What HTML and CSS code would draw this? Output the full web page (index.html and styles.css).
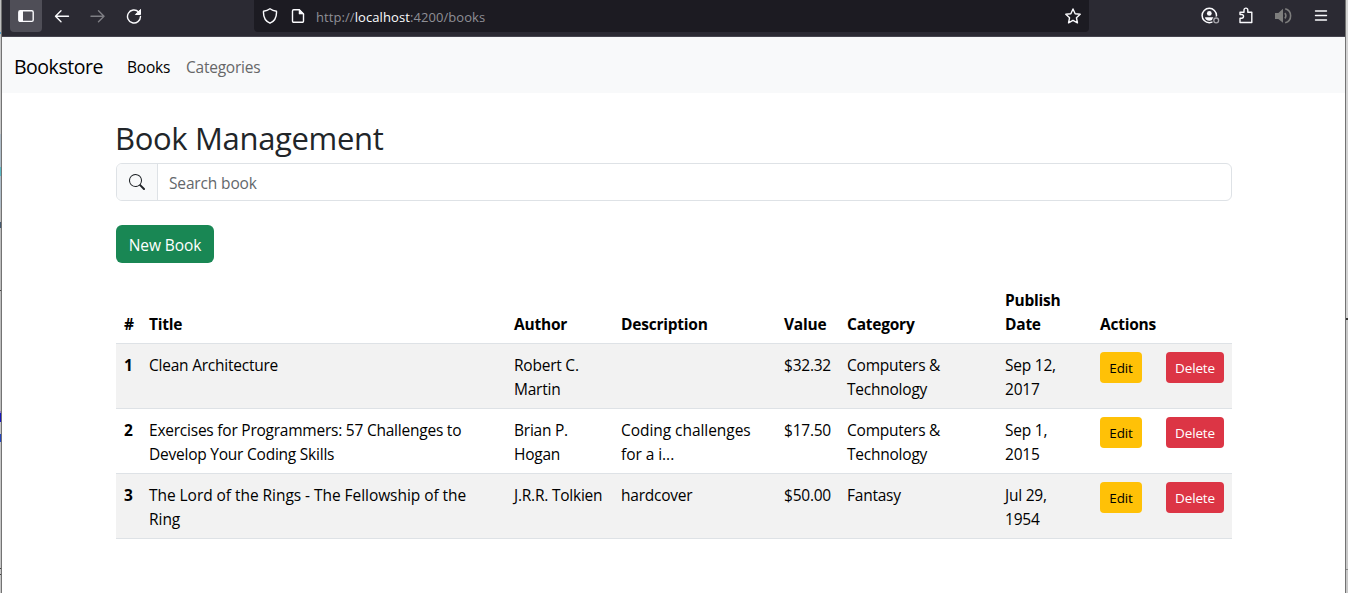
FILE: index.html
```html
<!DOCTYPE html>
<html lang="en">
<head>
<meta charset="utf-8">
<title>Bookstore</title>
<link rel="stylesheet" href="styles.css">
</head>
<body>
<div class="desktop">
<div class="edge edge-left"></div>
<div class="window">
  <header class="toolbar">
    <div class="tools">
      <span class="tool tool-active"><svg width="16" height="16" viewBox="0 0 16 16"><rect x=".8" y="2.8" width="14.4" height="10.6" rx="1.4" fill="none" stroke="#fbfbfe" stroke-width="1.4"/><path d="M1 3h4v10H1z" fill="#fbfbfe"/></svg></span>
      <span class="tool"><svg width="16" height="16" viewBox="0 0 16 16" class="line"><path d="M14.5 8.3H1.7M7 2.8 1.5 8.3 7 13.8"/></svg></span>
      <span class="tool dim"><svg width="16" height="16" viewBox="0 0 16 16" class="line"><path d="M1 8.3h12.8M8.500 2.800l5.500 5.500-5.500 5.500"/></svg></span>
      <span class="tool"><svg width="16" height="16" viewBox="0 0 16 16" class="line"><path d="M12.600 3.900A6.500 6.500 0 1 0 14.500 8.500"/><path d="M14.500 1.800v4.700H9.800z" fill="#fbfbfe" stroke-width="1"/></svg></span>
    </div>
    <div class="address">
      <svg width="16" height="16" viewBox="0 0 16 16" class="line"><path d="M8 .8C6.200 2.100 4 2.900 1.500 3.200 1.200 8.500 3 13 8 15.200c5-2.200 6.800-6.700 6.500-12C12 2.900 9.800 2.100 8 .8z"/></svg>
      <svg width="16" height="16" viewBox="0 0 16 16" class="line page-icon"><path d="M9.300 1.700H3.700a1.200 1.200 0 0 0-1.200 1.200v10.200a1.200 1.200 0 0 0 1.200 1.200h8.600a1.200 1.200 0 0 0 1.200-1.200V6z"/><path d="M9 1.500v4.600h4.700z" fill="#fbfbfe" stroke-width=".5"/></svg>
      <span class="url">http://<b>localhost</b>:4200/books</span>
      <svg width="16" height="16" viewBox="0 0 16 16" class="line star"><path d="m8 1 2.150 4.700 5.050.6-3.750 3.450 1 5.050L8 12.300l-4.450 2.500 1-5.050L.8 6.300l5.050-.6z"/></svg>
    </div>
    <div class="menus">
      <svg width="20" height="18" viewBox="0 0 20 18"><circle cx="8.300" cy="8.500" r="7.200" fill="none" stroke="#fbfbfe" stroke-width="1.500"/><circle cx="8.300" cy="6.400" r="2.400" fill="#fbfbfe"/><path d="M4 10.200h8.600c-.2 2.200-1.800 3.600-4.300 3.600S4.200 12.400 4 10.200z" fill="#fbfbfe"/><circle cx="15.200" cy="13.400" r="4" fill="#2b2a33"/><circle cx="15.200" cy="13.400" r="2.400" fill="none" stroke="#a5a4aa" stroke-width="1.300"/></svg>
      <svg width="16" height="18" viewBox="0 0 16 18" class="line"><path d="M2 15.500V11.200h1.700a1.700 1.700 0 0 0 0-3.700H2V5.300h4V3a1.900 1.900 0 0 1 3.800 0v2.300h4v10.200z"/></svg>
      <svg width="18" height="18" viewBox="0 0 18 18" class="speaker"><path d="M1 6h3.300L9 1.800v13.900L4.300 12H1z" fill="#7d7d7d"/><path d="M10.800 6.200a3.500 3.500 0 0 1 0 5.100M11.200 1.700a7.300 7.300 0 0 1 0 14.100" fill="none" stroke="#7d7d7d" stroke-width="1.600"/></svg>
      <svg width="16" height="18" viewBox="0 0 16 18" class="line hamburger"><path d="M2.500 4h11M2.500 8.500h11M2.500 13h11"/></svg>
    </div>
  </header>
  <nav class="navbar">
    <a class="brand">Bookstore</a>
    <a class="link active">Books</a>
    <a class="link categories">Categories</a>
  </nav>
  <main class="container">
    <h2><span>Book Management</span></h2>
    <div class="search">
      <span class="search-icon"><svg width="16" height="16" viewBox="0 0 16 16" fill="#212529"><path d="M11.742 10.344a6.500 6.500 0 1 0-1.397 1.398h-.001q.044.060.098.115l3.850 3.850a1 1 0 0 0 1.415-1.414l-3.850-3.850a1 1 0 0 0-.115-.1zM12 6.500a5.500 5.500 0 1 1-11 0 5.500 5.500 0 0 1 11 0"/></svg></span>
      <span class="search-field">Search book</span>
    </div>
    <button class="btn btn-new">New Book</button>
    <table>
      <colgroup><col class="c-num"><col class="c-title"><col class="c-author"><col class="c-desc"><col class="c-value"><col class="c-cat"><col class="c-date"><col class="c-edit"><col class="c-del"></colgroup>
      <thead><tr><th>#</th><th>Title</th><th>Author</th><th>Description</th><th>Value</th><th>Category</th><th>Publish<br>Date</th><th colspan="2">Actions</th></tr></thead>
      <tbody>
        <tr><th>1</th><td>Clean Architecture</td><td>Robert C.<br>Martin</td><td></td><td>$32.32</td><td>Computers &amp;<br>Technology</td><td>Sep 12,<br>2017</td><td class="action"><button class="btn btn-edit">Edit</button></td><td class="action"><button class="btn btn-del">Delete</button></td></tr>
        <tr><th>2</th><td>Exercises for Programmers: 57 Challenges to<br>Develop Your Coding Skills</td><td>Brian P.<br>Hogan</td><td class="roomy">Coding challenges<br>for a i...</td><td>$17.50</td><td>Computers &amp;<br>Technology</td><td>Sep 1,<br>2015</td><td class="action"><button class="btn btn-edit">Edit</button></td><td class="action"><button class="btn btn-del">Delete</button></td></tr>
        <tr><th>3</th><td class="roomy">The Lord of the Rings - The Fellowship of the<br>Ring</td><td>J.R.R. Tolkien</td><td>hardcover</td><td>$50.00</td><td>Fantasy</td><td>Jul 29,<br>1954</td><td class="action"><button class="btn btn-edit">Edit</button></td><td class="action"><button class="btn btn-del">Delete</button></td></tr>
      </tbody>
    </table>
  </main>
</div>
<div class="edge edge-right"></div>
</div>
</body>
</html>
```

FILE: styles.css
```css
* { box-sizing: border-box; }
body { margin: 0; background: #fff; color: #212529; font: 15.5px/24px "Open Sans", "Noto Sans", sans-serif; letter-spacing: -0.23px; overflow: hidden; }
svg { display: block; flex: none; }
.desktop { display: flex; height: 593px; }
.window { flex: 1; min-width: 0; }
.edge { flex: none; }
.edge-left { width: 2px; border-right: 1px solid #737373; background: linear-gradient(#bfbfbf 0 32px, #55a0c8 32px 34px, #c8c8c8 34px 134px, #aebcc8 134px 167px, #59b9c5 167px 176px, #aebcc8 176px 208px, #bcbcbc 208px 222px, #455a70 222px 228px, #bdbdbd 228px 290px, #444 290px 291px, #bdbdbd 291px 411px, #9781c2 411px 413px, #1717bd 413px 422px, #c6c6c6 422px 434px, #2345bd 434px 442px, #c6c6c6 442px 568px, #444 568px 569px, #c6c6c6 569px 574px, #444 574px 575px, #c6c6c6 575px); }
.edge-right { width: 3px; border-left: 1px solid #737373; background: linear-gradient(#d4d4d4 0 318px, #333 318px 320px, #c9c9c9 320px 569px, #888 569px 570px, #c9c9c9 570px); }

.toolbar { display: flex; height: 37px; padding-left: 8px; background: #2b2a33; border-bottom: 1px solid #45444e; }
.tools { display: flex; gap: 4px; width: 244px; }
.tool { display: flex; align-items: center; justify-content: center; width: 32px; height: 32px; }
.tool-active { background: #4f4e57; border-radius: 0 0 4px 4px; }
.dim { opacity: .4; }
.line { fill: none; stroke: #fbfbfe; stroke-width: 1.4; stroke-linecap: round; stroke-linejoin: round; }
.address { display: flex; align-items: center; width: 835px; height: 32px; padding: 0 8px; background: #1c1b22; border-radius: 0 0 4px 4px; }
.page-icon { margin-left: 12px; }
.url { margin-left: 10px; padding-top: 2px; color: #8f8f96; font-size: 13px; letter-spacing: 0.08px; }
.url b { color: #fbfbfe; font-weight: 400; }
.star { margin-left: auto; }
.menus { display: flex; align-items: center; height: 32px; margin-left: 112px; gap: 17px; }
.speaker { margin-left: 3px; }
.hamburger { margin-left: 4px; }

.navbar { display: flex; align-items: center; height: 56px; padding: 3px 12px 0; background: #f8f9fa; }
.brand { width: 113px; color: #000; font-size: 19.500px; letter-spacing: -0.48px; }
.link { color: #666768; }
.active { width: 59px; color: #000; }

.container { width: 1116px; margin-left: 114px; padding-top: 24px; }
h2 { margin: 0 0 8px; font-size: 31px; line-height: 38px; height: 38px; font-weight: 400; letter-spacing: -0.33px; padding-top: 2px; white-space: nowrap; text-indent: -1px; }
.search { display: flex; height: 38px; margin-bottom: 24px; border: 1px solid #dee2e6; border-radius: 6px; overflow: hidden; }
.search-icon { display: flex; align-items: center; justify-content: center; width: 41px; padding-right: 1px; background: #f8f9fa; border-right: 1px solid #dee2e6; }
.search-field { padding: 7px 11px; color: #63676b; letter-spacing: -0.15px; }
.btn { display: block; padding: 2px 0 0; border: 0; font: inherit; letter-spacing: inherit; color: #fff; text-align: center; }
.btn-new { width: 98px; height: 38px; margin-bottom: 16px; background: #198754; border-radius: 6px; letter-spacing: -0.1px; }
.btn-edit, .btn-del { height: 31px; padding: 0; border-radius: 4px; font-size: 13.500px; letter-spacing: -0.15px; }
.btn-edit { width: 42px; background: #ffc107; color: #000; }
.btn-del { width: 58px; background: #dc3545; }

table { width: 1116px; table-layout: fixed; border-collapse: separate; border-spacing: 0; color: #000; white-space: nowrap; }
tr { height: 65px; }
th, td { padding: 9px 8px 7px; border-bottom: 1px solid #dee2e6; text-align: left; vertical-align: top; }
.action { padding: 8px; }
.roomy { letter-spacing: -0.05px; }
th { font-weight: 700; }
thead th { vertical-align: bottom; }
tbody tr:nth-child(odd) { background: #f2f2f2; }
.c-num { width: 25px; }
.c-title { width: 365px; }
.c-author { width: 107px; }
.c-desc { width: 163px; }
.c-value { width: 63px; }
.c-cat { width: 158px; }
.c-date { width: 95px; }
.c-edit { width: 66px; }
.c-del { width: 74px; }
```
